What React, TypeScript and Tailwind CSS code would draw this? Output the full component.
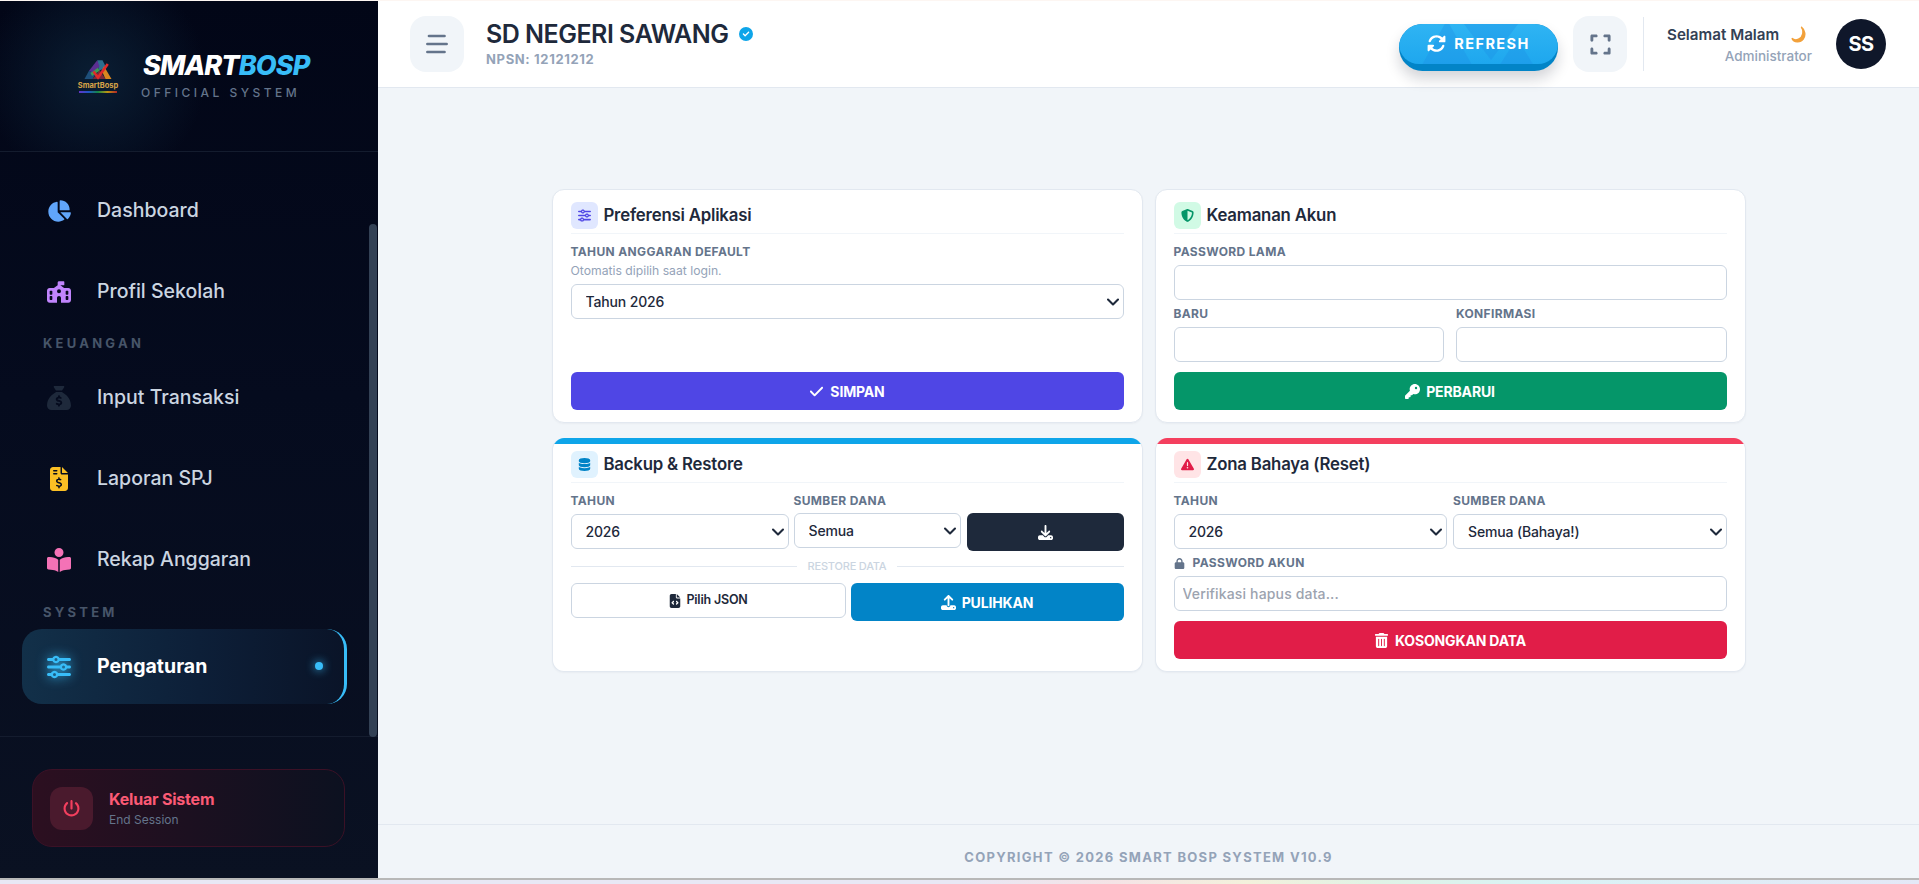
import React from "react";
import { ChevronDown } from "lucide-react";
import {
  FaChartPie, FaSchoolFlag, FaSackDollar, FaFileInvoiceDollar, FaBookOpenReader, FaSliders, FaPowerOff,
  FaRotate, FaExpand, FaCircleCheck, FaShieldHalved, FaDatabase, FaTriangleExclamation, FaKey, FaCheck,
  FaDownload, FaFileCode, FaUpload, FaTrashCan, FaLock,
} from "react-icons/fa6";

const font = { fontFamily: '"Inter", "Liberation Sans", sans-serif' };

function NavItem({ icon, label, color }: { icon: React.ReactNode; label: string; color: string }) {
  return (
    <div className="flex h-[75px] items-center pl-[24px]">
      <span className={`flex w-[26px] justify-center [&_svg]:h-[24px] [&_svg]:w-auto [&_svg]:shrink-0 ${color}`}>{icon}</span>
      <span className="ml-[25px] text-[19.5px] font-medium text-[#cbd5e1]">{label}</span>
    </div>
  );
}

function NavLabel({ children, className }: { children: React.ReactNode; className: string }) {
  return (
    <div className={`pl-[21px] text-[13px] leading-[14px] font-bold tracking-[0.25em] text-[#475569] ${className}`}>
      {children}
    </div>
  );
}

function Logo() {
  return (
    <div className="flex w-[40px] flex-col items-center">
      <svg viewBox="0 0 40 26" className="h-[24px] w-[30px]">
        <polygon points="19,0 26,0 31,10 21,14" fill="#2c6e8f" />
        <polygon points="19,0 8,14 15,18 22,8" fill="#5b2f91" />
        <polygon points="8,14 2,25 13,25 17,18" fill="#1e4f7a" />
        <polygon points="13,25 30,25 22,13" fill="#7b2a3a" />
        <polygon points="28,8 38,25 30,25 25,14" fill="#d9861f" />
        <polygon points="10,17 20,10 22,14 12,21" fill="#3f9c52" />
        <polyline points="14,15 20,23 33,5" fill="none" stroke="#e02a2a" strokeWidth="3.5" />
      </svg>
      <span className="text-[7.5px] leading-[8px] font-bold whitespace-nowrap text-[#d8a548]">SmartBosp</span>
      <span className="mt-[1px] h-[2px] w-[38px] bg-[linear-gradient(90deg,#7c3aed,#2563eb,#16a34a,#eab308,#dc2626)] opacity-80" />
    </div>
  );
}

function Sidebar() {
  return (
    <aside className="relative flex h-full w-[378px] shrink-0 flex-col bg-[linear-gradient(180deg,#020617_0%,#050b1e_45%,#0a1122_100%)]">
      <div className="flex h-[151px] shrink-0 items-center border-b border-[#141c2e] bg-[radial-gradient(circle_at_25%_50%,#0a1e33_0%,#04102a00_38%)] pb-[2px] pl-[78px]">
        <Logo />
        <div className="ml-[25px] flex flex-col">
          <div className="text-[27px] leading-[30px] font-extrabold tracking-[-0.9px] text-white italic">
            SMART<span className="text-[#38bdf8]">BOSP</span>
          </div>
          <div className="mt-[5px] -ml-[2px] text-[12px] leading-[14px] font-medium tracking-[0.29em] whitespace-nowrap text-[#64748b]">
            OFFICIAL SYSTEM
          </div>
        </div>
      </div>
      <nav className="flex h-[585px] shrink-0 flex-col border-b border-[#141c2e] pt-[21px] pl-[22px]">
        <div className="flex flex-col gap-[6px]">
          <NavItem icon={<FaChartPie />} label="Dashboard" color="text-[#60a5fa]" />
          <NavItem icon={<FaSchoolFlag />} label="Profil Sekolah" color="text-[#c084fc]" />
        </div>
        <NavLabel className="mt-[7px] mb-[10px]">KEUANGAN</NavLabel>
        <div className="flex flex-col gap-[6px]">
          <NavItem icon={<FaSackDollar />} label="Input Transaksi" color="text-[#1e293b]" />
          <NavItem icon={<FaFileInvoiceDollar />} label="Laporan SPJ" color="text-[#fbbf24]" />
          <NavItem icon={<FaBookOpenReader />} label="Rekap Anggaran" color="text-[#f472b6]" />
        </div>
        <NavLabel className="mt-[8px] mb-[10px]">SYSTEM</NavLabel>
        <div className="relative flex h-[75px] w-[325px] items-center rounded-[20px] border-r-[3px] border-[#38bdf8] bg-[linear-gradient(90deg,#123049_0%,#0d1f38_55%,#0a1428_100%)] pl-[24px]">
          <span className="flex w-[26px] justify-center text-[#38bdf8] drop-shadow-[0_0_6px_#38bdf8] [&_svg]:h-[24px] [&_svg]:w-auto">
            <FaSliders />
          </span>
          <span className="ml-[25px] text-[19.5px] font-bold text-white">Pengaturan</span>
          <span className="absolute top-[33px] right-[21px] h-[8px] w-[8px] rounded-full bg-[#38bdf8] shadow-[0_0_10px_#38bdf8]" />
        </div>
      </nav>
      <div className="absolute top-[223px] left-[369px] h-[513px] w-[8px] rounded-full bg-[#334155]" />
      <div className="flex flex-1 items-start pt-[32px] pl-[32px]">
        <div className="flex h-[78px] w-[313px] items-center rounded-[20px] border border-[#3b1126] bg-[linear-gradient(90deg,#2c0f20_0%,#0c1120_100%)] pl-[17px]">
          <span className="flex h-[43px] w-[43px] items-center justify-center rounded-xl bg-[#4a1a2d] text-[17px] text-[#f43f5e]">
            <FaPowerOff />
          </span>
          <div className="ml-[16px] flex flex-col">
            <span className="text-[16px] leading-[20px] font-bold tracking-[-0.2px] text-[#fb5a75]">Keluar Sistem</span>
            <span className="mt-[3px] text-[12px] leading-[15px] text-[#64748b]">End Session</span>
          </div>
        </div>
      </div>
    </aside>
  );
}

function Header() {
  return (
    <header className="flex h-[87px] shrink-0 items-center border-b border-[#e2e8f0] bg-white pr-[33px] pl-[32px]">
      <button className="flex h-[56px] w-[54px] items-center justify-center rounded-2xl bg-[#f1f5f9]">
        <svg viewBox="0 0 22 20" className="h-[20px] w-[22px]" stroke="#64748b" strokeWidth="2.7" strokeLinecap="round">
          <line x1="3" y1="2" x2="18.5" y2="2" />
          <line x1="1.4" y1="10" x2="20.6" y2="10" />
          <line x1="1.4" y1="18" x2="18.5" y2="18" />
        </svg>
      </button>
      <div className="ml-[22px] flex flex-1 -translate-y-px flex-col">
        <div className="flex items-center">
          <span className="text-[25px] leading-[30px] font-semibold tracking-[-0.5px] text-[#1e293b]">SD NEGERI SAWANG</span>
          <FaCircleCheck className="ml-[11px] text-[14px] text-[#0ea5e9]" />
        </div>
        <span className="mt-[2px] text-[13px] leading-[16px] font-bold tracking-[0.65px] text-[#94a3b8]">NPSN: 12121212</span>
      </div>
      <button className="relative mt-[6px] flex h-[47px] w-[159px] items-start justify-center overflow-hidden rounded-full bg-[#0284c7] shadow-[0_8px_14px_rgba(15,23,42,0.18)]">
        <span className="relative flex h-[40px] w-full items-center justify-center gap-[8px] overflow-hidden rounded-full bg-[linear-gradient(180deg,#2fb4f3,#1ea7ee)] text-white">
          <svg viewBox="0 0 159 40" className="absolute inset-0 h-[40px] w-[159px]" fill="#1f8fe6" opacity="0.35">
            <polygon points="18,50 48,-4 78,50" />
            <polygon points="62,-4 92,36 122,-4" />
            <polygon points="95,50 118,14 140,50" />
          </svg>
          <FaRotate className="relative text-[19px]" />
          <span className="relative text-[14.5px] font-bold tracking-[1.4px]">REFRESH</span>
        </span>
      </button>
      <button className="ml-[15px] flex h-[56px] w-[54px] items-center justify-center rounded-2xl bg-[#f1f5f9] text-[#64748b]">
        <FaExpand className="h-[23px] w-auto" />
      </button>
      <div className="ml-[16px] h-[54px] w-px bg-[#e2e8f0]" />
      <div className="ml-[23px] flex w-[145px] flex-col items-end">
        <div className="flex items-center self-start">
          <span className="text-[15.2px] leading-[20px] font-semibold whitespace-nowrap text-[#334155]">Selamat Malam</span>
          <svg viewBox="0 0 16 18" className="ml-[12px] h-[17px] w-[15px] shrink-0">
            <path d="M11 1c3 4 2 11-3 13-2 1-5 1-7-1 2 5 9 5 12 1 3-4 2-10-2-13z" fill="#f2a13b" stroke="#f2a13b" strokeWidth="1.5" />
          </svg>
        </div>
        <span className="mt-[3px] text-[13.5px] leading-[16px] font-medium text-[#94a3b8]">Administrator</span>
      </div>
      <div className="ml-[24px] flex h-[50px] w-[50px] items-center justify-center rounded-full bg-[#0f172a] text-[20px] font-bold tracking-[-0.5px] text-white">
        SS
      </div>
    </header>
  );
}

function CardHead({ icon, title, bg, color }: { icon: React.ReactNode; title: string; bg: string; color: string }) {
  return (
    <div className="flex h-[32px] shrink-0 items-start border-b border-[#f1f5f9]">
      <span className={`flex h-[27px] w-[27px] items-center justify-center rounded-md text-[13px] ${bg} ${color}`}>{icon}</span>
      <span className="ml-[6px] text-[16.8px] leading-[27px] font-semibold tracking-[-0.2px] text-[#1e293b]">{title}</span>
    </div>
  );
}

function Label({ children, className = "" }: { children: React.ReactNode; className?: string }) {
  return <div className={`text-[12px] leading-[12px] font-bold tracking-[0.35px] text-[#64748b] ${className}`}>{children}</div>;
}

function Select({ value, className = "" }: { value: string; className?: string }) {
  return (
    <div className={`relative h-[35px] ${className}`}>
      <select
        defaultValue={value}
        className="h-full w-full appearance-none rounded-md border border-[#cbd5e1] bg-white pl-[14px] text-[14px] font-medium tracking-[-0.15px] text-[#1e293b] outline-none"
      >
        <option>{value}</option>
      </select>
      <ChevronDown className="pointer-events-none absolute top-[8px] right-[1px] h-[20px] w-[20px] text-[#1e293b]" strokeWidth={2.5} />
    </div>
  );
}

function Input({ placeholder, className = "" }: { placeholder?: string; className?: string }) {
  return (
    <input
      placeholder={placeholder}
      className={`block h-[35px] w-full rounded-md border border-[#cbd5e1] bg-white px-[8px] text-[14px] font-medium tracking-[0.15px] outline-none placeholder:text-[#9ca3af] ${className}`}
    />
  );
}

function ActionButton({ icon, label, bg, className = "" }: { icon: React.ReactNode; label: string; bg: string; className?: string }) {
  return (
    <button className={`flex h-[38px] items-center justify-center gap-[6px] rounded-md text-[14px] font-bold tracking-[-0.15px] text-white [&_svg]:h-[15px] [&_svg]:w-auto ${bg} ${className}`}>
      {icon}
      {label}
    </button>
  );
}

function Card({ bar, children }: { bar?: string; children: React.ReactNode }) {
  return (
    <section className={`flex h-[234px] flex-col overflow-hidden rounded-xl border border-[#e2e8f0] bg-white shadow-[0_1px_2px_rgba(15,23,42,0.04)] ${bar ? "border-t-0" : ""}`}>
      {bar ? <div className={`h-[6px] shrink-0 ${bar}`} /> : null}
      <div className={`flex min-h-0 flex-1 flex-col px-[18px] pb-[12px] ${bar ? "pt-[7px]" : "pt-[12px]"}`}>{children}</div>
    </section>
  );
}

function Content() {
  return (
    <div className="flex-1 pt-[101px]">
      <div className="mx-auto grid w-[1194px] grid-cols-2 gap-x-[12px] gap-y-[15px]">
        <Card>
          <CardHead icon={<FaSliders />} title="Preferensi Aplikasi" bg="bg-[#e0e7ff]" color="text-[#4f46e5]" />
          <Label className="mt-[12px]">TAHUN ANGGARAN DEFAULT</Label>
          <div className="mt-[7px] text-[12.2px] leading-[12px] text-[#94a3b8]">Otomatis dipilih saat login.</div>
          <Select value="Tahun 2026" className="mt-[7px]" />
          <ActionButton icon={<FaCheck />} label="SIMPAN" bg="bg-[#4f46e5]" className="mt-auto" />
        </Card>
        <Card>
          <CardHead icon={<FaShieldHalved />} title="Keamanan Akun" bg="bg-[#d1fae5]" color="text-[#059669]" />
          <Label className="mt-[12px]">PASSWORD LAMA</Label>
          <Input className="mt-[7px]" />
          <div className="mt-[8px] grid grid-cols-2 gap-x-[12px]">
            <div>
              <Label>BARU</Label>
              <Input className="mt-[7px]" />
            </div>
            <div>
              <Label>KONFIRMASI</Label>
              <Input className="mt-[7px]" />
            </div>
          </div>
          <ActionButton icon={<FaKey />} label="PERBARUI" bg="bg-[#059669]" className="mt-auto" />
        </Card>
        <Card bar="bg-[#0ea5e9]">
          <CardHead icon={<FaDatabase />} title="Backup & Restore" bg="bg-[#e0f2fe]" color="text-[#0284c7]" />
          <div className="mt-[12px] flex items-start gap-[5px]">
            <div className="w-[218px]">
              <Label>TAHUN</Label>
              <Select value="2026" className="mt-[7px]" />
            </div>
            <div className="w-[167px]">
              <Label>SUMBER DANA</Label>
              <Select value="Semua" className="mt-[6px]" />
            </div>
            <button className="mt-[18px] ml-[1px] flex h-[38px] flex-1 items-center justify-center rounded-md bg-[#1e293b] text-white">
              <FaDownload className="h-[15px] w-auto" />
            </button>
          </div>
          <div className="mt-[9px] flex items-center gap-[11px]">
            <div className="h-px flex-1 bg-[#e2e8f0]" />
            <span className="text-[11px] leading-[12px] font-medium tracking-[-0.2px] text-[#cbd5e1]">RESTORE DATA</span>
            <div className="h-px flex-1 bg-[#e2e8f0]" />
          </div>
          <div className="mt-[11px] flex items-start gap-[5px]">
            <button className="flex h-[35px] flex-1 items-center justify-center gap-[4px] rounded-md border border-[#cbd5e1] bg-white text-[12.5px] font-semibold tracking-[-0.2px] text-[#1e293b]">
              <FaFileCode className="h-[14px] w-auto" />
              Pilih JSON
            </button>
            <ActionButton icon={<FaUpload />} label="PULIHKAN" bg="bg-[#0284c7]" className="flex-1" />
          </div>
        </Card>
        <Card bar="bg-[#f43f5e]">
          <CardHead icon={<FaTriangleExclamation />} title="Zona Bahaya (Reset)" bg="bg-[#ffe4e6]" color="text-[#e11d48]" />
          <div className="mt-[12px] grid grid-cols-2 gap-x-[6px]">
            <div>
              <Label>TAHUN</Label>
              <Select value="2026" className="mt-[7px]" />
            </div>
            <div>
              <Label>SUMBER DANA</Label>
              <Select value="Semua (Bahaya!)" className="mt-[7px]" />
            </div>
          </div>
          <Label className="mt-[8px] flex items-center">
            <FaLock className="mr-[8px] text-[11px]" />
            PASSWORD AKUN
          </Label>
          <Input placeholder="Verifikasi hapus data..." className="mt-[7px]" />
          <ActionButton icon={<FaTrashCan />} label="KOSONGKAN DATA" bg="bg-[#e11d48]" className="mt-auto" />
        </Card>
      </div>
    </div>
  );
}

export default function App() {
  return (
    <div className="flex h-[884px] w-full flex-col overflow-hidden bg-[#f1f5f9]" style={font}>
      <div className="h-px shrink-0 bg-[#fdf6f2]" />
      <div className="flex h-[877px] shrink-0">
        <Sidebar />
        <main className="flex min-w-0 flex-1 flex-col">
          <Header />
          <Content />
          <footer className="flex h-[54px] shrink-0 items-center justify-center border-t border-[#e2e8f0] pt-[12px] text-[13px] font-bold tracking-[1.3px] text-[#94a3b8]">
            COPYRIGHT © 2026 SMART BOSP SYSTEM V10.9
          </footer>
        </main>
      </div>
      <div className="h-[2px] shrink-0 bg-[#b8b8b8]" />
      <div className="flex-1 bg-[linear-gradient(90deg,#e8e8f5_0%,#e8e8f5_50%,#f5e3e6_58%,#f3f1dc_65%,#dff3e6_72%,#d9f3f5_80%,#e4e8f7_100%)]" />
    </div>
  );
}
